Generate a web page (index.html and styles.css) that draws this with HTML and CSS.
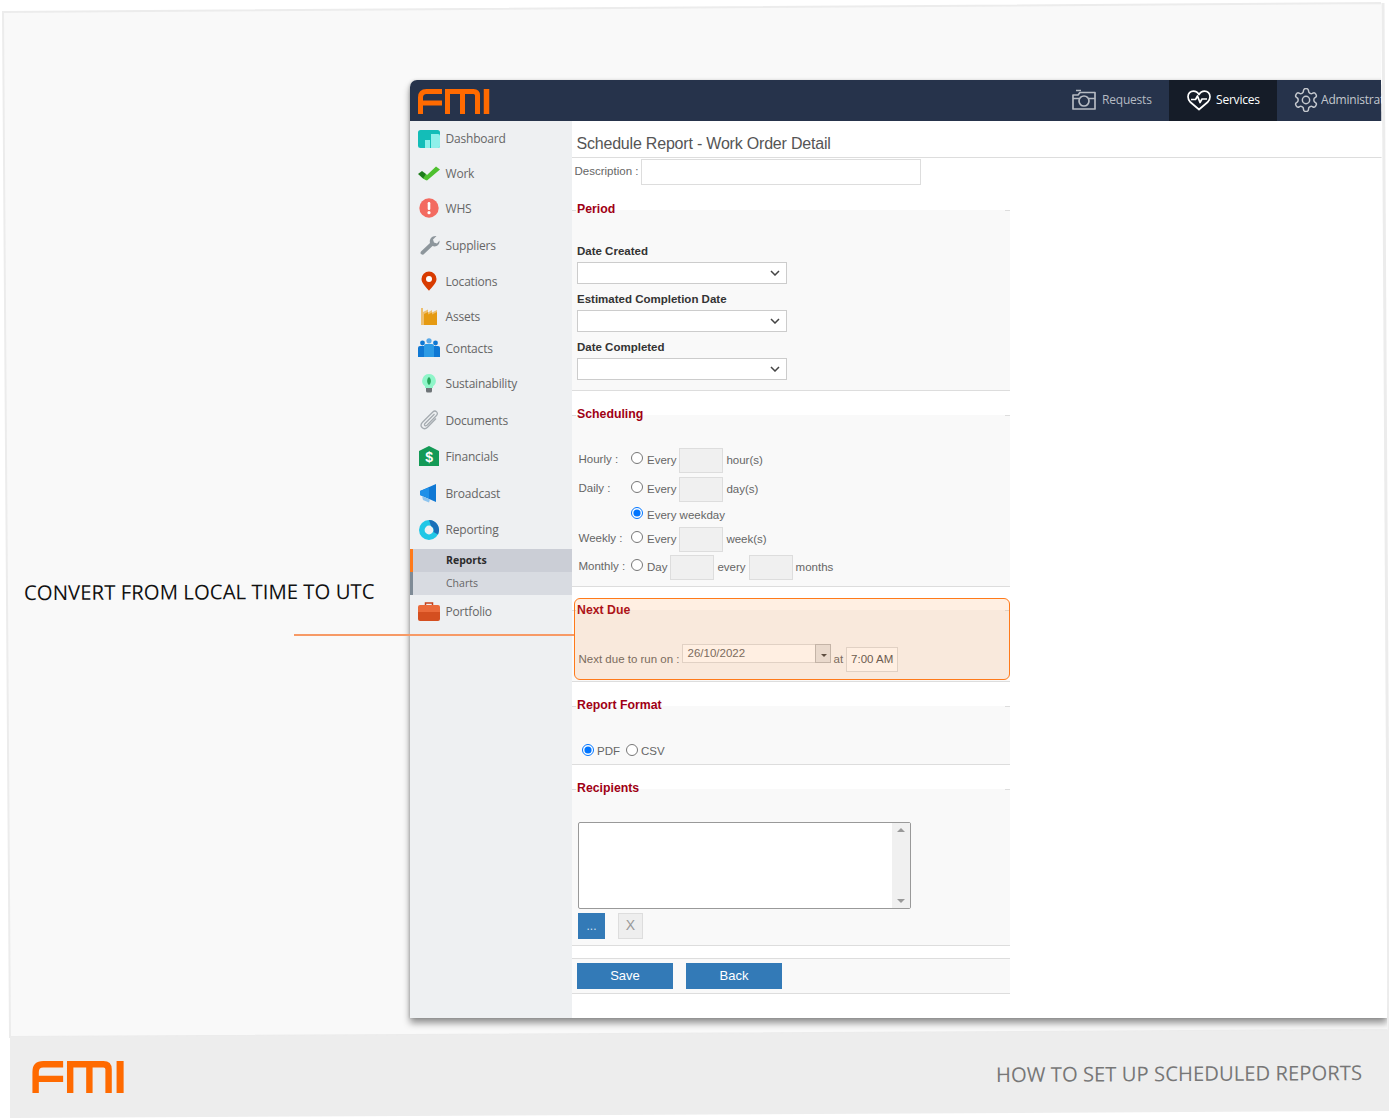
FILE: index.html
```html
<!DOCTYPE html>
<html lang="en">
<head>
<meta charset="utf-8">
<title>How to set up scheduled reports</title>
<link rel="stylesheet" href="styles.css">
</head>
<body>
<svg class="defs" width="0" height="0" aria-hidden="true">
  <symbol id="fmi" viewBox="0 0 72 25">
    <path d="M2.5 25V8.5Q2.5 2.5 8.5 2.5H24M2.5 14H24" fill="none" stroke="#ff6a00" stroke-width="5"/>
    <path d="M29.5 2.5H55.5Q59.5 2.5 59.5 6.5V25M29.5 0V25M44.5 2.5V25" fill="none" stroke="#ff6a00" stroke-width="5"/>
    <path d="M68.5 0V25" fill="none" stroke="#ff6a00" stroke-width="5.5"/>
  </symbol>
</svg>
<div class="page">
  <svg class="backdrop" viewBox="0 0 1389 1119" aria-hidden="true">
    <polygon points="3,12 1382,3 1389,1030 10,1037" fill="#f9f9f9" stroke="#ececec" stroke-width="2"/>
    <polygon points="10,1037 1389,1030 1389,1111 10,1118" fill="#ededed"/>
  </svg>

  <div class="stage">
    <div class="callout"><span class="callout-text">CONVERT FROM LOCAL TIME TO UTC</span></div>
    <div class="app">
      <header class="topbar">
        <svg class="topbar-logo"><use href="#fmi"/></svg>
        <nav class="tabs">
          <a class="tab tab-requests">
            <svg class="tab-icon" viewBox="0 0 24 21" fill="none" stroke="#b5bac2" stroke-width="1.7"><path d="M1 5.500H6L8 3H23V19.500H1Z" stroke-linejoin="round"/><circle cx="12" cy="11.500" r="5"/><path d="M4 1H9M1 9H7M17 9H23"/></svg>
            Requests
          </a>
          <a class="tab tab-services">
            <svg class="tab-icon" viewBox="0 0 24 21" fill="none" stroke="#fff" stroke-width="1.700"><path d="M3.200 12.500C1.600 10.600 1 9 1 7.200 1 4 3.400 1.600 6.400 1.600 8.600 1.600 10.800 2.800 12 5 13.200 2.800 15.400 1.600 17.600 1.600 20.600 1.600 23 4 23 7.200 23 9 22.400 10.600 20.800 12.500L12 20Z" stroke-linejoin="round"/><path d="M4 10H8.500L10.500 6.500 13 13 15 9.500H20" stroke-linejoin="round"/></svg>
            Services
          </a>
          <a class="tab tab-admin">
            <svg class="tab-icon tab-icon-gear" viewBox="1.500 1.500 21 21" fill="none" stroke="#c4c8ce" stroke-width="1.300"><path d="M12.220 2h-.44a2 2 0 0 0-2 2v.18a2 2 0 0 1-1 1.730l-.43.25a2 2 0 0 1-2 0l-.15-.08a2 2 0 0 0-2.730.73l-.22.38a2 2 0 0 0 .73 2.730l.15.1a2 2 0 0 1 1 1.720v.51a2 2 0 0 1-1 1.740l-.15.09a2 2 0 0 0-.73 2.730l.22.38a2 2 0 0 0 2.730.73l.15-.08a2 2 0 0 1 2 0l.43.25a2 2 0 0 1 1 1.730V20a2 2 0 0 0 2 2h.44a2 2 0 0 0 2-2v-.18a2 2 0 0 1 1-1.730l.43-.25a2 2 0 0 1 2 0l.15.08a2 2 0 0 0 2.730-.73l.22-.39a2 2 0 0 0-.73-2.730l-.15-.08a2 2 0 0 1-1-1.740v-.5a2 2 0 0 1 1-1.740l.15-.09a2 2 0 0 0 .73-2.730l-.22-.38a2 2 0 0 0-2.730-.73l-.15.08a2 2 0 0 1-2 0l-.43-.25a2 2 0 0 1-1-1.730V4a2 2 0 0 0-2-2z"/><circle cx="12" cy="12" r="3.200"/></svg>
            Administrators
          </a>
        </nav>
      </header>
      <div class="app-body">
        <aside class="sidebar">
          <ul class="nav">
            <li class="nav-item"><svg class="nav-icon" viewBox="0 0 22 20"><rect y="1" width="22" height="18" rx="2.500" fill="#13bdb8"/><path d="M7 19V11H12V19ZM13 19V5H20Q22 5 22 7V17Q22 19 20 19Z" fill="#8ff0ea"/></svg>Dashboard</li>
            <li class="nav-item"><svg class="nav-icon" viewBox="0 0 22 20"><path d="M0 11 4 8 8 11 7 16 5 15.500Z" fill="#1e7d1c"/><path d="M5 15.500 8 11 9 12 18 3.500 22 6.500 9 17.500 7.500 17Z" fill="#4ec02f"/></svg>Work</li>
            <li class="nav-item"><svg class="nav-icon" viewBox="0 0 22 20"><circle cx="11" cy="10" r="9.700" fill="#f36b61"/><rect x="9.700" y="4" width="2.600" height="8" rx="1.200" fill="#fff"/><circle cx="11" cy="14.700" r="1.600" fill="#fff"/></svg>WHS</li>
            <li class="nav-item"><svg class="nav-icon" viewBox="0 0 22 20"><path d="M3 16.500 12 8C11 4 14 .5 18.500 1L15 4.500 16 7.500 19 8.500 21.500 5.500C22 10 18 12.500 14.500 11L5.500 19.500Q3.500 20 2.500 18.500Q2.300 17.300 3 16.500Z" fill="#8d969c"/></svg>Suppliers</li>
            <li class="nav-item"><svg class="nav-icon" viewBox="0 0 22 20"><path d="M11 19.800C8.500 16.500 3.500 12.500 3.500 8A7.500 7.500 0 0 1 18.500 8C18.500 12.500 13.500 16.500 11 19.800Z" fill="#d83b01"/><circle cx="11" cy="8" r="3" fill="#fff"/></svg>Locations</li>
            <li class="nav-item"><svg class="nav-icon" viewBox="0 0 22 20"><path d="M3 2H5V6L10 3.500V6.500L14 4V6.500L19 4V19H3Z" fill="#edbf6f"/><path d="M6 19V8L10 6V8.500L14 6.500V8.500L19 6V19Z" fill="#e59a12"/></svg>Assets</li>
            <li class="nav-item"><svg class="nav-icon" viewBox="0 0 22 20"><circle cx="4.500" cy="5" r="2.400" fill="#0f78d4"/><circle cx="11" cy="2.800" r="2.600" fill="#5aa9e8"/><circle cx="17.500" cy="5" r="2.400" fill="#0f78d4"/><path d="M0 19V10Q0 8 2 8H7V19Z" fill="#0f78d4"/><path d="M15 19V8H20Q22 8 22 10V19Z" fill="#0f78d4"/><path d="M6 19V8Q6 6 8 6H14Q16 6 16 8V19Z" fill="#2d9be5"/></svg>Contacts</li>
            <li class="nav-item"><svg class="nav-icon" viewBox="0 0 22 20"><path d="M11 1A6.800 6.800 0 0 1 15 13.300V15H7V13.300A6.800 6.800 0 0 1 11 1Z" fill="#8ff5c9"/><path d="M11 4C13.500 6 13.500 10 11 12 8.500 10 8.500 6 11 4Z" fill="#25a55a"/><path d="M8 15H14V18Q14 19.500 12.500 19.500H9.500Q8 19.500 8 18Z" fill="#6e7478"/></svg>Sustainability</li>
            <li class="nav-item"><svg class="nav-icon" viewBox="0 0 22 20" fill="none" stroke="#a5abb0" stroke-width="1.300"><path d="M16.500 4 7 13.500C5.500 15 7.300 16.800 9 15.300L18.500 5.500C21 3 17.500 -.500 14.800 2L4.500 12.300C.8 16 5.500 21 9.500 17.200L18 8.500"/></svg>Documents</li>
            <li class="nav-item"><svg class="nav-icon" viewBox="0 0 22 20"><path d="M1 5 11 0 21 5V20H1Z" fill="#149a57"/><text x="11" y="16" class="dollar">$</text></svg>Financials</li>
            <li class="nav-item"><svg class="nav-icon" viewBox="0 0 22 20"><path d="M2 8 18 1V19L2 12Z" fill="#0f78d4"/><path d="M2 8 11 4.500V15.500L2 12Z" fill="#1e90e8"/><path d="M4 13 12 16.500 11 19.500 5 17Z" fill="#8cc4ef"/></svg>Broadcast</li>
            <li class="nav-item"><svg class="nav-icon" viewBox="0 0 22 20"><circle cx="11" cy="10" r="7.200" fill="none" stroke="#21c7e6" stroke-width="5.600"/><path d="M11 .000A10 10 0 0 1 20 14.500L15.500 12A5 5 0 0 0 13 6Z" fill="#1a6fb8"/></svg>Reporting</li>
            <li class="nav-sub nav-sub-active">Reports</li>
            <li class="nav-sub">Charts</li>
            <li class="nav-item"><svg class="nav-icon" viewBox="0 0 22 20"><path d="M7.500 3V1H14.500V3" fill="none" stroke="#c6401a" stroke-width="1.500"/><path d="M2 3H20Q22 3 22 5V10H0V5Q0 3 2 3Z" fill="#ea6a3a"/><path d="M0 10H22V17Q22 19 20 19H2Q0 19 0 17Z" fill="#d44f20"/></svg>Portfolio</li>
          </ul>
        </aside>
        <main class="content">
          <h1 class="page-title">Schedule Report - Work Order Detail</h1>
          <div class="form">
            <div class="desc-row"><span class="muted">Description :</span><input class="field desc-input" type="text"></div>

            <fieldset class="section section-period">
              <legend>Period</legend>
              <label class="date-label">Date Created</label>
              <select class="date-select"><option></option></select>
              <label class="date-label">Estimated Completion Date</label>
              <select class="date-select"><option></option></select>
              <label class="date-label">Date Completed</label>
              <select class="date-select"><option></option></select>
            </fieldset>

            <fieldset class="section section-sched">
              <legend>Scheduling</legend>
              <div class="sched-grid">
                <div class="sched-row"><span class="sched-label">Hourly :</span><input class="radio" type="radio" name="s"><span class="radio-text">Every</span><input class="num" type="text"><span>hour(s)</span></div>
                <div class="sched-row"><span class="sched-label">Daily :</span><input class="radio" type="radio" name="s"><span class="radio-text">Every</span><input class="num" type="text"><span>day(s)</span></div>
                <div class="sched-row sched-row-short"><span class="sched-label"></span><input class="radio" type="radio" name="s" checked><span class="radio-text">Every weekday</span></div>
                <div class="sched-row"><span class="sched-label">Weekly :</span><input class="radio" type="radio" name="s"><span class="radio-text">Every</span><input class="num" type="text"><span>week(s)</span></div>
                <div class="sched-row"><span class="sched-label">Monthly :</span><input class="radio" type="radio" name="s"><span class="radio-text">Day</span><input class="num" type="text"><span>every</span><input class="num" type="text"><span>months</span></div>
              </div>
            </fieldset>

            <div class="highlight">
              <fieldset class="section section-due">
                <legend>Next Due</legend>
                <div class="due-row">
                  <span class="due-label">Next due to run on :</span>
                  <div class="date-box"><span class="date-value">26/10/2022</span><span class="date-btn"></span></div>
                  <span class="due-label">at</span>
                  <input class="field time-input" type="text" value="7:00 AM">
                </div>
              </fieldset>
            </div>

            <fieldset class="section section-format">
              <legend>Report Format</legend>
              <div class="format-row"><input class="radio" type="radio" name="f" checked><span class="fmt-text">PDF</span><input class="radio radio-csv" type="radio" name="f"><span class="fmt-text">CSV</span></div>
            </fieldset>

            <fieldset class="section section-recip">
              <legend>Recipients</legend>
              <div class="listbox"><div class="scroll"><span class="arrow-up"></span><span class="arrow-down"></span></div></div>
              <div class="recip-actions"><button class="btn btn-more" type="button">...</button><button class="btn-x" type="button">X</button></div>
            </fieldset>

            <div class="actions"><button class="btn btn-main" type="button">Save</button><button class="btn btn-main" type="button">Back</button></div>
          </div>
        </main>
      </div>
    </div>
  </div>

  <footer class="footer">
    <svg class="footer-logo"><use href="#fmi"/></svg>
    <span class="footer-title">HOW TO SET UP SCHEDULED REPORTS</span>
  </footer>

  <div class="connector"></div>
  <svg class="edge" viewBox="0 0 1389 1119" aria-hidden="true">
    <polygon points="1381,0 1389,0 1389,1030 1387.500,1030 1381,80" fill="#fff"/>
    <path d="M1383 3 1389 1030" stroke="#ececec" stroke-width="3"/>
  </svg>
</div>
</body>
</html>
```
FILE: styles.css
```css
* { box-sizing: border-box; }
html, body { margin: 0; background: #fff; }
body { font-family: "Liberation Sans", Arial, sans-serif; font-size: 11.5px; color: #666; }
.defs { position: absolute; }

.page { position: relative; width: 1389px; height: 1119px; overflow: hidden; padding-top: 80px; }
.backdrop, .edge { position: absolute; left: 0; top: 0; width: 1389px; height: 1119px; pointer-events: none; }
.edge { z-index: 3; }

.stage { position: relative; display: grid; grid-template-columns: 410px 977px; height: 938px; }
.callout { padding: 500px 0 0 24px; }
.callout-text { display: block; font: 500 20.400px/24px "Open Sans", sans-serif; color: #111; white-space: nowrap; transform: rotate(-.2deg); transform-origin: left center; }

.connector { position: absolute; z-index: 2; left: 294px; top: 634px; width: 280px; height: 1.500px; background: #f79a66; }

/* app window */
.app { display: flex; flex-direction: column; height: 938px; background: #fff; border-radius: 7px 0 0 0; box-shadow: 0 5px 7px rgba(0,0,0,.42), -1px 0 3px rgba(0,0,0,.12); }
.topbar { display: flex; align-items: stretch; height: 41px; flex: none; background: #26334b; border-radius: 7px 0 0 0; font-family: "Open Sans", sans-serif; overflow: hidden; }
.topbar-logo { width: 72px; height: 25px; margin: 8.500px 0 0 8px; }
.tabs { display: flex; margin-left: auto; }
.tab { display: flex; align-items: center; padding-bottom: 2px; white-space: nowrap; font-size: 12px; letter-spacing: -.2px; }
.tab-icon { flex: none; width: 24px; height: 22px; }
.tab-icon-gear { height: 24px; }
.tab-requests { width: 118px; padding-left: 21px; gap: 6px; color: #b5bac2; }
.tab-services { width: 108px; padding-left: 18px; gap: 5px; background: #151c28; color: #fff; }
.tab-admin { width: 110px; padding-left: 17px; gap: 3px; color: #c4c8ce; overflow: hidden; }

.app-body { display: flex; flex: 1; min-height: 0; }

/* sidebar */
.sidebar { flex: none; width: 162px; background: #eef0f2; font-family: "Open Sans", sans-serif; }
.nav { list-style: none; margin: 0; padding: 0; display: grid; grid-template-rows: 35px 34px 36px 38px 34px 36px 28px 42px 32px 40px 34px 39px 23px 23px 33px; }
.nav-item { display: flex; align-items: center; gap: 5.500px; padding-left: 8px; font-size: 12px; letter-spacing: -.2px; color: #666; }
.nav-icon { flex: none; width: 22px; height: 20px; }
.dollar { font: bold 14px "Liberation Sans", sans-serif; fill: #fff; text-anchor: middle; }
.nav-sub { display: flex; align-items: center; padding: 0 0 1px 33px; font-size: 10.500px; color: #666; background: #d8dbe1; border-left: 3px solid #7f8b96; }
.nav-sub-active { background: #cbced6; border-left-color: #ff7a1a; font-weight: 700; color: #2c2c2c; }

/* content */
.content { flex: 1; min-width: 0; }
.page-title { margin: 0; height: 37px; padding: 13px 0 0 4.500px; border-bottom: 1px solid #ddd; font: 400 16px/20px "Liberation Sans", sans-serif; letter-spacing: -.2px; color: #555; }
.form { width: 438px; }
.desc-row { display: flex; align-items: center; gap: 3px; height: 28px; padding: 0 0 1px 2.500px; }
.muted { position: relative; top: -1px; color: #666; }
.field { border: 1px solid #ddd; background: #fff; padding: 0; margin: 0; font: 11.500px "Liberation Sans", sans-serif; color: #555; outline: 0; }
.desc-input { width: 280px; height: 26px; }

.section { --pad: 0px; margin: 16px 0 0; padding: 0 0 0 var(--pad); min-width: 0; border: 0; border-top: 1px solid #ddd; border-bottom: 1px solid #ddd; background: #f9f9f9; }
.section legend { width: 429px; height: 16px; margin-left: calc(4px - var(--pad)); padding: 0 0 0 1px; font: 700 12.300px/14px "Liberation Sans", sans-serif; color: #a00014; }

.section-period { --pad: 5px; padding-top: 26px; padding-bottom: 10px; }
.date-label { display: block; height: 14px; font: 700 11.500px/14px "Liberation Sans", sans-serif; color: #333; }
.date-select { display: block; width: 210px; height: 22px; margin: 4px 0 8px; padding: 0; border: 1px solid #ccc; border-radius: 0; background: #fff url("data:image/svg+xml,%3Csvg xmlns='http://www.w3.org/2000/svg' width='10' height='6'%3E%3Cpath d='M1 1l4 4 4-4' fill='none' stroke='%23444' stroke-width='1.500'/%3E%3C/svg%3E") no-repeat right 6px center; appearance: none; }
.date-select:last-child { margin-bottom: 0; }

.section-sched { --pad: 6.500px; padding-top: 25px; padding-bottom: 6px; }
.sched-grid { display: grid; grid-template-rows: 29px 29px 21px 28px 25px; }
.sched-row { display: flex; align-items: center; height: 25px; gap: 3px; }
.sched-row > span { position: relative; top: -1px; }
.sched-row-short { height: 20px; }
.sched-row > .sched-label { width: 49.500px; flex: none; top: -2px; white-space: nowrap; }
.radio { width: 12px; height: 12px; margin: -6px 0 0; flex: none; }
.radio-text { margin-left: 1px; }
.num { width: 44px; height: 25px; margin: 0; padding: 0; flex: none; border: 1px solid #ddd; background: #f0f0f0; }

.highlight { position: relative; margin-top: 15px; }
.highlight::after { content: ""; position: absolute; left: 2px; right: 0; top: -4px; bottom: 2px; border: 1px solid #ff7a1a; border-radius: 6px; background: rgba(255,140,50,.14); pointer-events: none; }
.section-due { --pad: 6.500px; margin-top: 0; padding-top: 26px; padding-bottom: 9px; }
.section-due legend { line-height: 16px; }
.due-row { position: relative; display: flex; align-items: flex-end; height: 28px; gap: 3px; }
.due-label { line-height: 26px; }
.date-box { position: relative; display: flex; align-self: flex-start; width: 149px; height: 19px; margin-left: -1px; border: 1px solid #ddd; background: #fff; }
.date-value { padding-left: 5px; line-height: 16px; }
.date-btn { position: absolute; right: -1px; top: -1px; width: 16px; height: 19px; background: #e6e6e6; border: 1px solid #bbb; }
.date-btn::after { content: ""; position: absolute; left: 5px; top: 9px; border: 3px solid transparent; border-top-color: #444; border-bottom: 0; }
.time-input { width: 52px; height: 25px; padding: 0 0 1px 4px; }

.section-format { --pad: 10px; padding-top: 28px; padding-bottom: 4px; margin-top: 16px; }
.format-row { display: flex; align-items: center; height: 18px; gap: 3px; }
.fmt-text { font-size: 11.500px; }
.radio-csv { margin-left: 3px; margin-top: -4px; }
.format-row .radio { margin-top: -3px; }

.section-recip { --pad: 6px; padding-top: 25px; padding-bottom: 6px; }
.listbox { display: flex; justify-content: flex-end; width: 333px; height: 87px; background: #fff; border: 1px solid #999; border-radius: 2px; }
.scroll { position: relative; width: 18px; background: #f0f0f0; }
.arrow-up, .arrow-down { position: absolute; left: 5px; border: 4px solid transparent; }
.arrow-up { top: 5px; border-bottom-color: #999; border-top: 0; }
.arrow-down { bottom: 5px; border-top-color: #999; border-bottom: 0; }
.recip-actions { display: flex; gap: 13px; margin-top: 4px; }
.btn { border: 0; padding: 0; background: #337ab7; color: #fff; font-family: "Liberation Sans", sans-serif; }
.btn-more { width: 27px; height: 26px; font-size: 12px; color: #cfe0f0; }
.btn-x { width: 25px; height: 26px; padding: 0 0 2px; border: 1px solid #ddd; background: #eee; color: #999; font: 14px "Liberation Sans", sans-serif; }

.actions { display: flex; gap: 13px; margin-top: 12px; padding: 4px 0 4px 5px; border-top: 1px solid #ddd; border-bottom: 1px solid #ddd; background: #f9f9f9; }
.btn-main { width: 96px; height: 26px; padding-bottom: 2px; font-size: 13px; }

/* footer */
.footer { position: relative; display: flex; justify-content: space-between; align-items: center; height: 82px; margin: 17px 27px 0 32px; padding-top: 2px; }
.footer-logo { width: 93px; height: 32px; }
.footer-title { margin-bottom: 8px; font: 500 20.300px/24px "Open Sans", sans-serif; color: #777; white-space: nowrap; transform: rotate(-.3deg); }
```
